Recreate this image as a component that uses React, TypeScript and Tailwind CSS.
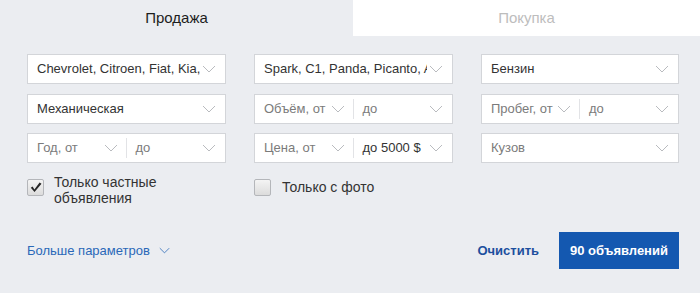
import React from "react";

const font = { fontFamily: '"Liberation Sans", Arial, sans-serif' };

function Chevron({ className = "", w = 14, h = 8 }: { className?: string; w?: number; h?: number }) {
  return (
    <svg width={w} height={h} viewBox="0 0 14 8" className={className}>
      <polyline points="1,1 7,7 13,1" fill="none" stroke="currentColor" strokeWidth="1" />
    </svg>
  );
}

function Select({ label, muted = false }: { label: string; muted?: boolean }) {
  return (
    <div className="flex h-[30px] items-center bg-white border border-[#d3d5d9] pl-[9px] pr-[9px]">
      <span
        className={`flex-1 overflow-hidden whitespace-nowrap text-[13px] ${
          muted ? "text-[#7b7b7b]" : "text-[#333]"
        }`}
      >
        {label}
      </span>
      <Chevron className="ml-[2px] shrink-0 text-[#b9bbbf]" />
    </div>
  );
}

function Range({ from, to, toDark = false }: { from: string; to: string; toDark?: boolean }) {
  return (
    <div className="flex h-[30px] items-center bg-white border border-[#d3d5d9]">
      <div className="flex flex-1 items-center pl-[9px] pr-[8px]">
        <span className="flex-1 whitespace-nowrap text-[13px] text-[#7b7b7b]">{from}</span>
        <Chevron className="shrink-0 text-[#b9bbbf]" />
      </div>
      <div className="h-[20px] w-px bg-[#e2e3e6]" />
      <div className="flex flex-1 items-center pl-[9px] pr-[9px]">
        <span className={`flex-1 whitespace-nowrap text-[13px] ${toDark ? "text-[#333]" : "text-[#7b7b7b]"}`}>
          {to}
        </span>
        <Chevron className="shrink-0 text-[#b9bbbf]" />
      </div>
    </div>
  );
}

function Checkbox({ checked }: { checked?: boolean }) {
  return (
    <div className="flex h-[17px] w-[17px] shrink-0 items-center justify-center rounded-[2px] border border-[#b4b6ba] bg-gradient-to-b from-[#f4f4f4] to-[#dcdcdc]">
      {checked && (
        <svg width="12" height="11" viewBox="0 0 12 11">
          <path d="M0.8 5.8 L4.5 10 L11.5 1.8 L9.6 0.6 L4.4 7.4 L2.6 4.6 Z" fill="#262626" />
        </svg>
      )}
    </div>
  );
}

export default function App() {
  return (
    <div className="h-[293px] w-[700px] overflow-hidden bg-[#ebedf1]" style={font}>
      <div className="flex h-9">
        <div className="flex w-[353px] items-center justify-center text-[15px] text-[#1d1d1d]">
          Продажа
        </div>
        <div className="flex flex-1 items-center justify-center bg-white text-[15px] text-[#bdbdbd]">
          Покупка
        </div>
      </div>

      <div className="pl-[27px] pr-[21px] pt-[18px]">
        <div className="grid grid-cols-[199px_199px_198px] justify-between gap-y-[9.5px]">
          <Select label="Chevrolet, Citroen, Fiat, Kia, Chery" />
          <Select label="Spark, C1, Panda, Picanto, Aveo" />
          <Select label="Бензин" />
          <Select label="Механическая" />
          <Range from="Объём, от" to="до" />
          <Range from="Пробег, от" to="до" />
          <Range from="Год, от" to="до" />
          <Range from="Цена, от" to="до 5000 $" toDark />
          <Select label="Кузов" muted />
        </div>

        <div className="mt-[14px] grid grid-cols-[199px_199px_198px] justify-between">
          <div className="flex items-start gap-[10px] pt-[2px]">
            <Checkbox checked />
            <span className="-mt-[5px] text-[14px] leading-[16px] text-[#333]">
              Только частные
              <br />
              объявления
            </span>
          </div>
          <div className="flex items-start gap-[11px] pt-[2px]">
            <Checkbox />
            <span className="text-[14px] leading-[16px] text-[#333]">Только с фото</span>
          </div>
          <div />
        </div>

        <div className="mt-[26px] flex items-center justify-between">
          <div className="flex items-center gap-[9px] text-[13px] text-[#2a68b8]">
            Больше параметров
            <Chevron className="text-[#2a68b8]" w={11} h={7} />
          </div>
          <div className="flex items-center gap-[20px]">
            <span className="text-[13px] font-bold text-[#1d4f9e]">Очистить</span>
            <div className="flex h-[37px] w-[120px] items-center justify-center bg-[#1458b0] text-[13px] font-bold text-white">
              90 объявлений
            </div>
          </div>
        </div>
      </div>
    </div>
  );
}
